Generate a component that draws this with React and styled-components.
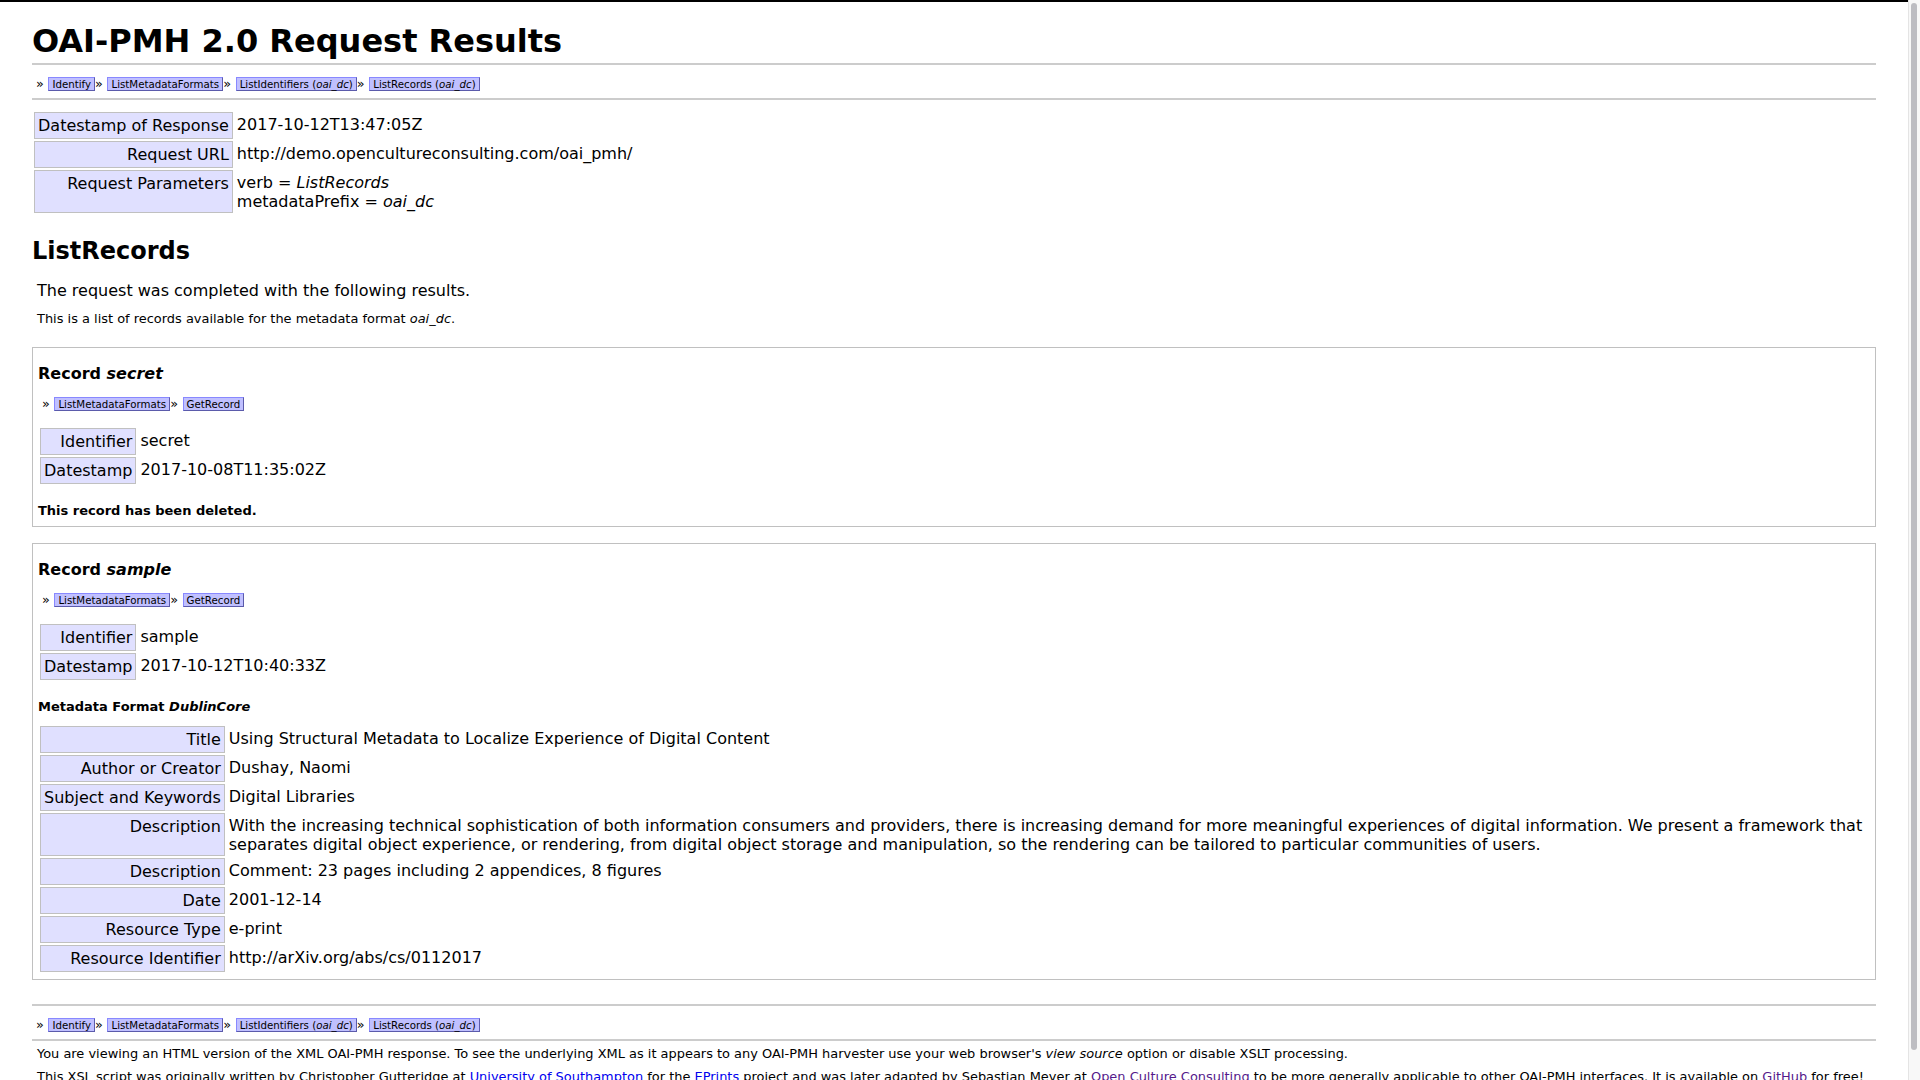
import React from 'react'
import styled, { createGlobalStyle } from 'styled-components'

const GlobalStyle = createGlobalStyle`
  html, body {
    margin: 0;
    padding: 0;
    overflow: hidden;
    background: #fff;
  }

  body {
    font-family: "DejaVu Sans", "Liberation Sans", sans-serif;
    font-size: 16px;
    color: #000;
  }
`

const Viewport = styled.div`
  display: flex;
  height: 100vh;
  overflow: hidden;
`

const Page = styled.div`
  flex: 1;
  min-width: 0;
  border-top: 2px solid #000;
  padding: 0 32px;
  overflow: hidden;
`

const Scrollbar = styled.div`
  width: 12px;
  box-sizing: border-box;
  border-left: 1px solid #e4e4e4;
  background: #f8f8f8;
  padding: 3px 3px 0 2px;
`

const Thumb = styled.div`
  height: 1047px;
  border-radius: 4px;
  background: #bdbdc2;
`

const Title = styled.h1`
  margin: 20px 0 3px;
  font-size: 32px;
  line-height: 38px;
  font-weight: bold;
`

const Nav = styled.ul`
  list-style: none;
  margin: ${p => (p.$bare ? '13px 0 14px' : `${p.$top || 0}px 0 0`)};
  padding: ${p => (p.$bare ? '0 4px' : '11px 4px 6px')};
  border-top: ${p => (p.$bare ? 'none' : '2px solid #ccc')};
  border-bottom: ${p => (p.$bare ? 'none' : '2px solid #ccc')};
  font-size: 12.8px;
  line-height: 15px;
  white-space: nowrap;

  li {
    display: inline;
  }
`

const NavLink = styled.a`
  margin-left: 0.5px;
  border: 1px outset #88f;
  background-color: #c0c0ff;
  padding: 0 3px;
  font-size: 10.24px;
  text-decoration: none;
  color: #000;
  cursor: pointer;

  &:hover {
    color: red;
  }
`

const KeyTable = styled.table`
  border-collapse: separate;
  border-spacing: 2px;
  margin-top: ${p => p.$top || 0}px;
  font-size: 16px;
`

const Key = styled.td`
  background-color: #e0e0ff;
  border: 1px solid #c0c0c0;
  padding: 3px;
  line-height: 19px;
  text-align: right;
  white-space: nowrap;
  vertical-align: top;
`

const Value = styled.td`
  padding: 4px 3px 2px 2px;
  line-height: 18.5px;
  vertical-align: top;
`

const SectionTitle = styled.h2`
  margin: 22px 0 0;
  font-size: 24px;
  line-height: 28px;
  font-weight: bold;
`

const Lead = styled.p`
  margin: 16px 0 0;
  padding-left: 5px;
  font-size: 16px;
  line-height: 19px;
`

const Small = styled.p`
  margin: ${p => p.$top}px 0 0;
  padding-left: 5px;
  font-size: 12.95px;
  line-height: 15px;

  a {
    color: #0000ee;
  }

  a.visited {
    color: #551a8b;
  }
`

const Record = styled.div`
  margin-top: ${p => p.$top}px;
  border: 1px solid #c0c0c0;
  padding: 5px;
`

const RecordTitle = styled.h3`
  margin: 11px 0 0;
  font-size: 16px;
  line-height: 19px;
  font-weight: bold;
`

const Deleted = styled.p`
  margin: 17px 0 3px;
  font-size: 13px;
  line-height: 15px;
  font-weight: bold;
`

const FormatTitle = styled.h4`
  margin: 17px 0 0;
  font-size: 13px;
  line-height: 15px;
  font-weight: bold;
`

const mainLinks = [
  'Identify',
  'ListMetadataFormats',
  <>ListIdentifiers (<i>oai_dc</i>)</>,
  <>ListRecords (<i>oai_dc</i>)</>,
]

const recordLinks = ['ListMetadataFormats', 'GetRecord']

function QuickLinks({ links, bare, top }) {
  return (
    <Nav $bare={bare} $top={top}>
      {links.map((label, i) => (
        <li key={i}>
          {'» '}
          <NavLink href="#">{label}</NavLink>
        </li>
      ))}
    </Nav>
  )
}

function Fields({ rows, top }) {
  return (
    <KeyTable $top={top}>
      <tbody>
        {rows.map(([k, v], i) => (
          <tr key={i}>
            <Key>{k}</Key>
            <Value>{v}</Value>
          </tr>
        ))}
      </tbody>
    </KeyTable>
  )
}

const dublinCore = [
  ['Title', 'Using Structural Metadata to Localize Experience of Digital Content'],
  ['Author or Creator', 'Dushay, Naomi'],
  ['Subject and Keywords', 'Digital Libraries'],
  ['Description', 'With the increasing technical sophistication of both information consumers and providers, there is increasing demand for more meaningful experiences of digital information. We present a framework that separates digital object experience, or rendering, from digital object storage and manipulation, so the rendering can be tailored to particular communities of users.'],
  ['Description', 'Comment: 23 pages including 2 appendices, 8 figures'],
  ['Date', '2001-12-14'],
  ['Resource Type', 'e-print'],
  ['Resource Identifier', 'http://arXiv.org/abs/cs/0112017'],
]

export default function App() {
  return (
    <>
      <GlobalStyle />
      <Viewport>
        <Page>
          <Title>OAI-PMH 2.0 Request Results</Title>
          <QuickLinks links={mainLinks} />

          <Fields
            top={10}
            rows={[
              ['Datestamp of Response', '2017-10-12T13:47:05Z'],
              ['Request URL', 'http://demo.opencultureconsulting.com/oai_pmh/'],
              ['Request Parameters', (
                <>
                  verb = <i>ListRecords</i><br />
                  metadataPrefix = <i>oai_dc</i>
                </>
              )],
            ]}
          />

          <SectionTitle>ListRecords</SectionTitle>
          <Lead>The request was completed with the following results.</Lead>
          <Small $top={11}>
            This is a list of records available for the metadata format <i>oai_dc</i>.
          </Small>

          <Record $top={21}>
            <RecordTitle>Record <i>secret</i></RecordTitle>
            <QuickLinks links={recordLinks} bare />
            <Fields
              rows={[
                ['Identifier', 'secret'],
                ['Datestamp', '2017-10-08T11:35:02Z'],
              ]}
            />
            <Deleted>This record has been deleted.</Deleted>
          </Record>

          <Record $top={16}>
            <RecordTitle>Record <i>sample</i></RecordTitle>
            <QuickLinks links={recordLinks} bare />
            <Fields
              rows={[
                ['Identifier', 'sample'],
                ['Datestamp', '2017-10-12T10:40:33Z'],
              ]}
            />
            <FormatTitle>Metadata Format <i>DublinCore</i></FormatTitle>
            <Fields top={10} rows={dublinCore} />
          </Record>

          <QuickLinks links={mainLinks} top={24} />

          <Small $top={5}>
            You are viewing an HTML version of the XML OAI-PMH response. To see the underlying XML as it appears to any OAI-PMH harvester use your web browser's <i>view source</i> option or disable XSLT processing.
          </Small>
          <Small $top={8}>
            This XSL script was originally written by Christopher Gutteridge at <a href="#">University of Southampton</a> for the <a href="#">EPrints</a> project and was later adapted by Sebastian Meyer at <a className="visited" href="#">Open Culture Consulting</a> to be more generally applicable to other OAI-PMH interfaces. It is available on <a className="visited" href="#">GitHub</a> for free!
          </Small>
        </Page>
        <Scrollbar>
          <Thumb />
        </Scrollbar>
      </Viewport>
    </>
  )
}
